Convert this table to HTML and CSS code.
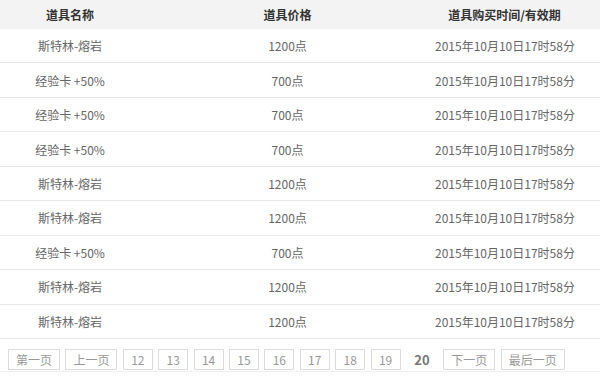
FILE: index.html
```html
<!DOCTYPE html>
<html lang="zh-CN">
<head>
<meta charset="utf-8">
<link rel="stylesheet" href="styles.css">
</head>
<body>
<div class="table">
  <div class="row head">
    <div class="cell">道具名称</div>
    <div class="cell">道具价格</div>
    <div class="cell">道具购买时间/有效期</div>
  </div>
  <div class="row"><div class="cell">斯特林-熔岩</div><div class="cell">1200点</div><div class="cell">2015年10月10日17时58分</div></div>
  <div class="row"><div class="cell">经验卡 +50%</div><div class="cell">700点</div><div class="cell">2015年10月10日17时58分</div></div>
  <div class="row"><div class="cell">经验卡 +50%</div><div class="cell">700点</div><div class="cell">2015年10月10日17时58分</div></div>
  <div class="row"><div class="cell">经验卡 +50%</div><div class="cell">700点</div><div class="cell">2015年10月10日17时58分</div></div>
  <div class="row"><div class="cell">斯特林-熔岩</div><div class="cell">1200点</div><div class="cell">2015年10月10日17时58分</div></div>
  <div class="row"><div class="cell">斯特林-熔岩</div><div class="cell">1200点</div><div class="cell">2015年10月10日17时58分</div></div>
  <div class="row"><div class="cell">经验卡 +50%</div><div class="cell">700点</div><div class="cell">2015年10月10日17时58分</div></div>
  <div class="row"><div class="cell">斯特林-熔岩</div><div class="cell">1200点</div><div class="cell">2015年10月10日17时58分</div></div>
  <div class="row"><div class="cell">斯特林-熔岩</div><div class="cell">1200点</div><div class="cell">2015年10月10日17时58分</div></div>
</div>
<div class="pager">
  <a class="btn wide">第一页</a>
  <a class="btn wide">上一页</a>
  <a class="btn">12</a>
  <a class="btn">13</a>
  <a class="btn">14</a>
  <a class="btn">15</a>
  <a class="btn">16</a>
  <a class="btn">17</a>
  <a class="btn">18</a>
  <a class="btn">19</a>
  <span class="current">20</span>
  <a class="btn wide">下一页</a>
  <a class="btn wide">最后一页</a>
</div>
</body>
</html>
```
FILE: styles.css
```css
html, body {
  margin: 0;
  padding: 0;
  background: #fff;
}
body {
  width: 600px;
  height: 381px;
  overflow: hidden;
  font-family: "Noto Sans CJK SC", "Noto Sans", sans-serif;
  font-size: 12px;
  color: #666;
}
.table {
  display: flex;
  flex-direction: column;
}
.row {
  display: grid;
  grid-template-columns: 140px 295px 139px 1fr;
  height: 33.44px;
  border-bottom: 1px solid #e8e8e8;
  align-items: center;
}
.row.head {
  height: 29px;
  border-bottom: none;
  background: #f3f3f3;
  color: #333;
  font-weight: bold;
}
.cell {
  text-align: center;
  white-space: nowrap;
}
.pager {
  display: flex;
  align-items: center;
  gap: 5.4px;
  padding: 10px 0 0 8px;
  height: 22px;
  border-bottom: 1px solid #f0f0f0;
}
.btn {
  box-sizing: border-box;
  width: 30px;
  height: 21px;
  border: 1px solid #dcdcdc;
  color: #999;
  display: flex;
  align-items: center;
  justify-content: center;
  font-size: 12px;
}
.btn.wide {
  width: auto;
  padding: 0 7px;
}
.current {
  width: 32px;
  text-align: center;
  font-weight: bold;
  color: #777;
  font-size: 13px;
}
```
